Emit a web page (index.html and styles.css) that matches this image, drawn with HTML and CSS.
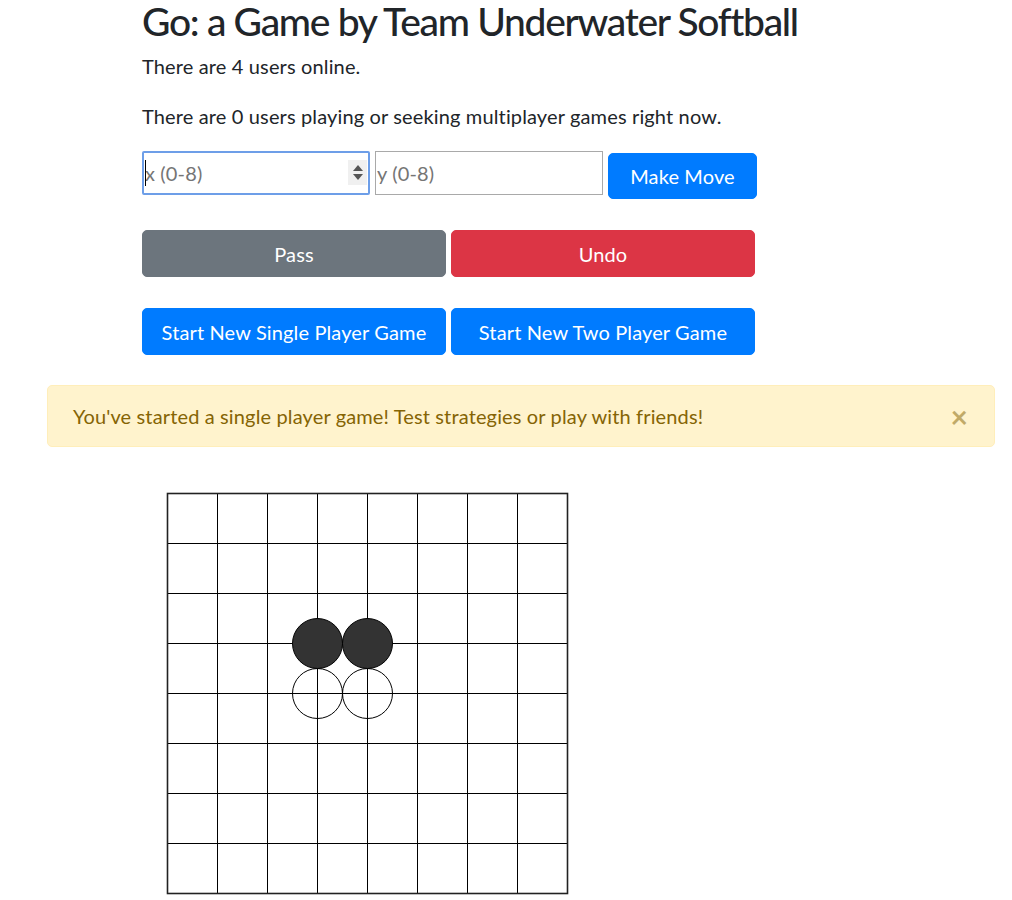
FILE: index.html
```html
<!DOCTYPE html>
<html lang="en">
<head>
<meta charset="utf-8">
<title>Go: a Game by Team Underwater Softball</title>
<link rel="stylesheet" href="styles.css">
</head>
<body>
<div class="page">
  <div class="content">
    <h2 class="title">Go: a Game by Team Underwater Softball</h2>
    <p class="info">There are 4 users online.</p>
    <p class="info">There are 0 users playing or seeking multiplayer games right now.</p>
    <div class="move-row">
      <div class="field">
        <input class="coord focused" type="text" placeholder="x (0-8)">
        <span class="caret"></span>
        <span class="spinner"><span class="tri up"></span><span class="tri down"></span></span>
      </div>
      <input class="coord" type="text" placeholder="y (0-8)">
      <button class="btn btn-primary btn-move">Make Move</button>
    </div>
    <div class="btn-row">
      <button class="btn btn-secondary btn-wide">Pass</button>
      <button class="btn btn-danger btn-wide">Undo</button>
    </div>
    <div class="btn-row">
      <button class="btn btn-primary btn-wide">Start New Single Player Game</button>
      <button class="btn btn-primary btn-wide">Start New Two Player Game</button>
    </div>
  </div>
  <div class="alert">
    You've started a single player game! Test strategies or play with friends!
    <span class="close">&times;</span>
  </div>
  <div class="content">
    <svg class="board" width="404" height="404" viewBox="0 0 404 404">
      <g stroke="#000" stroke-width="1" fill="none">
        <path d="M51.5 1.5V401.5M101.5 1.5V401.5M151.5 1.5V401.5M201.5 1.5V401.5M251.5 1.5V401.5M301.5 1.5V401.5M351.5 1.5V401.5"/>
        <path d="M1.5 51.5H401.5M1.5 101.5H401.5M1.5 151.5H401.5M1.5 201.5H401.5M1.5 251.5H401.5M1.5 301.5H401.5M1.5 351.5H401.5"/>
      </g>
      <rect x="1.5" y="1.5" width="400" height="400" fill="none" stroke="#222" stroke-width="1.6"/>
      <g stroke="#000" stroke-width="1">
        <circle cx="151.5" cy="151.5" r="25" fill="#333"/>
        <circle cx="201.5" cy="151.5" r="25" fill="#333"/>
        <circle cx="151.5" cy="201.5" r="25" fill="none"/>
        <circle cx="201.5" cy="201.5" r="25" fill="none"/>
      </g>
    </svg>
  </div>
</div>
</body>
</html>
```

FILE: styles.css
```css
* { box-sizing: border-box; }
html, body { margin: 0; padding: 0; background: #fff; }
body {
  font-family: Lato, "Noto Sans", sans-serif;
  font-size: 20px;
  line-height: 30px;
  letter-spacing: 0.14px;
  color: #212529;
}
.page {
  padding: 0 17px 0 47px;
}
.content {
  padding-left: 95px;
}
.title {
  margin: 0 0 9px 0;
  font-size: 39px;
  line-height: 42px;
  letter-spacing: -1.3px;
  font-weight: 500;
}
.info {
  margin: 0 0 20px 0;
}
.move-row {
  display: flex;
  align-items: flex-start;
  gap: 5px;
  margin-bottom: 31px;
}
.field {
  position: relative;
  width: 228px;
  height: 44px;
}
.coord {
  width: 228px;
  height: 44px;
  margin: 0;
  padding: 0 1px;
  border: 1px solid #a9a9a9;
  font-family: inherit;
  font-size: 20px;
  letter-spacing: 0.14px;
  color: #212529;
  background: #fff;
  outline: none;
}
.coord::placeholder { color: #757575; }
.coord.focused {
  border: 2px solid #6d9ee8;
  border-radius: 2px;
}
.caret {
  position: absolute;
  left: 3px;
  top: 9px;
  width: 1px;
  height: 26px;
  background: #000;
}
.spinner {
  position: absolute;
  left: 206px;
  top: 9px;
  width: 19px;
  height: 25px;
  background: #f0f0f0;
  display: flex;
  flex-direction: column;
  align-items: center;
  justify-content: center;
  gap: 3px;
}
.tri {
  width: 0;
  height: 0;
  border-left: 5px solid transparent;
  border-right: 5px solid transparent;
}
.tri.up { border-bottom: 6px solid #555; }
.tri.down { border-top: 6px solid #555; }
.btn {
  display: inline-block;
  margin: 0;
  font-family: inherit;
  font-size: 20px;
  line-height: 30px;
  letter-spacing: 0.14px;
  font-weight: 400;
  color: #fff;
  text-align: center;
  border: 1px solid transparent;
  border-radius: 5px;
  padding: 7px 15px;
  cursor: pointer;
}
.btn-primary { background: #007bff; border-color: #007bff; }
.btn-secondary { background: #6c757d; border-color: #6c757d; }
.btn-danger { background: #dc3545; border-color: #dc3545; }
.btn-move {
  margin-top: 2px;
  height: 46px;
  width: 149px;
  padding: 0;
}
.btn-row {
  display: flex;
  gap: 5px;
  margin-bottom: 31px;
}
.btn-row:last-of-type { margin-bottom: 30px; }
.btn-wide {
  width: 304px;
  height: 47px;
  padding: 0;
}
.alert {
  position: relative;
  padding: 15px 80px 15px 25px;
  background: #fff3cd;
  border: 1px solid #ffeeba;
  border-radius: 5px;
  color: #856404;
  margin-bottom: 45px;
}
.close {
  position: absolute;
  top: 0;
  right: 0;
  padding: 15px 26px;
  font-size: 30px;
  line-height: 30px;
  font-weight: 700;
  color: #856404;
  opacity: 0.5;
}
.board {
  display: block;
  margin-left: 24px;
}
```
